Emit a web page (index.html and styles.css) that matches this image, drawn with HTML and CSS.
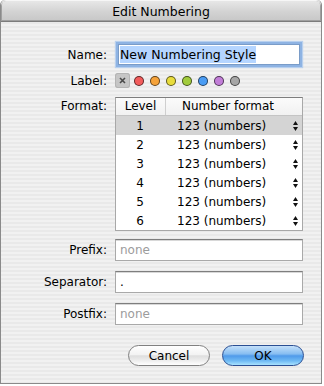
FILE: index.html
```html
<!DOCTYPE html>
<html lang="en">
<head>
  <meta charset="UTF-8">
  <title>Edit Numbering</title>
  <link rel="stylesheet" href="styles.css">
</head>
<body>
  <div class="window">
    <div class="titlebar">Edit Numbering</div>

    <div class="row row-name">
      <span class="lbl">Name:</span>
      <div class="field name-field"><span class="selected-text">New Numbering Style</span></div>
    </div>

    <div class="row row-label">
      <span class="lbl">Label:</span>
      <div class="swatches">
        <span class="no-label">
          <svg width="7" height="7" viewBox="0 0 7 7"><path d="M1 1L6 6M6 1L1 6" stroke="#4a4a4a" stroke-width="1.6"/></svg>
        </span>
        <span class="dot red"></span>
        <span class="dot orange"></span>
        <span class="dot yellow"></span>
        <span class="dot green"></span>
        <span class="dot blue"></span>
        <span class="dot purple"></span>
        <span class="dot gray"></span>
      </div>
    </div>

    <div class="row row-format">
      <span class="lbl">Format:</span>
      <div class="table">
        <div class="thead">
          <div class="th-level">Level</div>
          <div class="th-format">Number format</div>
        </div>
        <div class="tr selected"><span class="td-level">1</span><span class="td-format">123 (numbers)</span><svg class="stepper" width="5" height="10" viewBox="0 0 5 10"><path d="M2.5 0L5 4H0Z M0 6H5L2.5 10Z" fill="#111"/></svg></div>
        <div class="tr"><span class="td-level">2</span><span class="td-format">123 (numbers)</span><svg class="stepper" width="5" height="10" viewBox="0 0 5 10"><path d="M2.5 0L5 4H0Z M0 6H5L2.5 10Z" fill="#111"/></svg></div>
        <div class="tr"><span class="td-level">3</span><span class="td-format">123 (numbers)</span><svg class="stepper" width="5" height="10" viewBox="0 0 5 10"><path d="M2.5 0L5 4H0Z M0 6H5L2.5 10Z" fill="#111"/></svg></div>
        <div class="tr"><span class="td-level">4</span><span class="td-format">123 (numbers)</span><svg class="stepper" width="5" height="10" viewBox="0 0 5 10"><path d="M2.5 0L5 4H0Z M0 6H5L2.5 10Z" fill="#111"/></svg></div>
        <div class="tr"><span class="td-level">5</span><span class="td-format">123 (numbers)</span><svg class="stepper" width="5" height="10" viewBox="0 0 5 10"><path d="M2.5 0L5 4H0Z M0 6H5L2.5 10Z" fill="#111"/></svg></div>
        <div class="tr"><span class="td-level">6</span><span class="td-format">123 (numbers)</span><svg class="stepper" width="5" height="10" viewBox="0 0 5 10"><path d="M2.5 0L5 4H0Z M0 6H5L2.5 10Z" fill="#111"/></svg></div>
      </div>
    </div>

    <div class="row row-prefix">
      <span class="lbl">Prefix:</span>
      <div class="field placeholder">none</div>
    </div>

    <div class="row row-gap">
      <span class="lbl">Separator:</span>
      <div class="field">.</div>
    </div>

    <div class="row row-gap">
      <span class="lbl">Postfix:</span>
      <div class="field placeholder">none</div>
    </div>

    <div class="buttons">
      <button class="btn btn-cancel">Cancel</button>
      <button class="btn btn-ok">OK</button>
    </div>
  </div>
</body>
</html>
```

FILE: styles.css
```css
body {
  margin: 0;
  background: #fff;
  font-family: "DejaVu Sans", sans-serif;
  font-size: 12px;
  color: #000;
}
.window {
  width: 322px;
  height: 384px;
  box-sizing: border-box;
  border: 1px solid #8a8a8a;
  border-top: none;
  border-radius: 5px 5px 0 0;
  overflow: hidden;
  background: repeating-linear-gradient(#f1f1f1 0 2px, #e9e9e9 2px 4px);
}
.titlebar {
  height: 21px;
  line-height: 23px;
  text-align: center;
  font-size: 12.5px;
  border-bottom: 1px solid #7c7c7c;
  border-radius: 5px 5px 0 0;
  box-shadow: inset 0 1px 0 #f6f6f6, inset 0 0 0 1px #a0a0a0;
  background: linear-gradient(#e9e9e9, #d3d3d3 55%, #c7c7c7);
}
.row {
  display: flex;
  align-items: center;
  gap: 8px;
}
.lbl {
  width: 106px;
  text-align: right;
  flex: none;
}
.row-name {
  margin-top: 22px;
}
.row-label {
  margin-top: 8px;
}
.row-format {
  margin-top: 9px;
  align-items: flex-start;
}
.row-format .lbl {
  line-height: 18px;
}
.row-prefix {
  margin-top: 8px;
}
.row-gap {
  margin-top: 10px;
}
.field {
  width: 188px;
  height: 22px;
  box-sizing: border-box;
  padding-left: 4px;
  line-height: 20px;
  background: #fff;
  border: 1px solid #a9a9a9;
  border-top-color: #7e7e7e;
  box-shadow: inset 0 1px 0 #d8d8d8;
}
.placeholder {
  color: #9c9c9c;
}
.name-field {
  width: 182px;
  height: 21px;
  margin-left: 3px;
  padding-left: 1px;
  font-size: 12.5px;
  line-height: 19px;
  border-color: #7a9cc8;
  box-shadow: 0 0 0 2px #8eb3e3, 0 0 1px 3px #b8d0ee;
}
.selected-text {
  background: #b5d5ff;
  padding: 1px 0;
}
.swatches {
  display: flex;
  align-items: center;
  gap: 6px;
}
.no-label {
  width: 15px;
  height: 15px;
  margin-right: -2px;
  border-radius: 3px;
  background: #c6c6c6;
  box-shadow: inset 0 0 0 1px #b4b4b4;
  display: flex;
  align-items: center;
  justify-content: center;
}
.dot {
  width: 10px;
  height: 10px;
  box-sizing: border-box;
  border-radius: 50%;
  border: 1px solid rgba(0, 0, 0, 0.6);
}
.red { background: #f25c5c; }
.orange { background: #f5a23a; }
.yellow { background: #e8dc3c; }
.green { background: #a2cc3c; }
.blue { background: #4a9cf4; }
.purple { background: #c27ed8; }
.gray { background: #a6a6a6; }
.table {
  width: 188px;
  box-sizing: border-box;
  background: #fff;
  border: 1px solid #a8a8a8;
  border-top-color: #7e7e7e;
}
.thead {
  display: flex;
  height: 17px;
  line-height: 17px;
  border-bottom: 1px solid #c4c4c4;
  background: linear-gradient(#fbfbfb, #f1f1f1);
}
.th-level {
  width: 49px;
  text-align: center;
  border-right: 1px solid #cfcfcf;
}
.th-format {
  flex: 1;
  text-align: center;
  padding-right: 12px;
}
.tr {
  display: flex;
  align-items: center;
  height: 19px;
}
.tr.selected {
  background: #d4d4d4;
}
.td-level {
  width: 48px;
  text-align: center;
}
.td-format {
  flex: 1;
  padding-left: 13px;
}
.stepper {
  margin-right: 4px;
}
.buttons {
  display: flex;
  justify-content: flex-end;
  gap: 12px;
  margin-top: 20px;
  padding-right: 17px;
}
.btn {
  width: 82px;
  height: 21px;
  border-radius: 11px;
  font-family: "DejaVu Sans", sans-serif;
  font-size: 12px;
  color: #000;
  padding: 0;
}
.btn-cancel {
  border: 1px solid #808080;
  background: linear-gradient(#ffffff, #f3f3f3 45%, #dedede 52%, #f0f0f0 80%, #ffffff);
}
.btn-ok {
  border: 1px solid #2b4f93;
  background: linear-gradient(#c4e0fa, #86bdf1 42%, #4f9aea 52%, #6fbaf4 78%, #a8e2ff);
}
```
